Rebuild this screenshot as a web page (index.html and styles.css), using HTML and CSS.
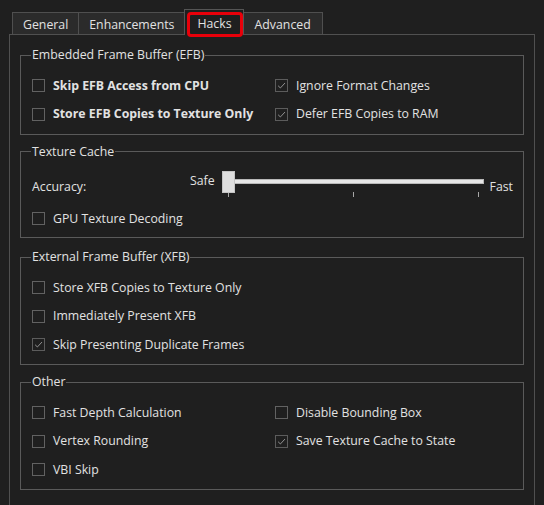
FILE: index.html
```html
<!DOCTYPE html>
<html lang="en">
<head>
<meta charset="utf-8">
<title>Graphics – Hacks</title>
<link rel="stylesheet" href="styles.css">
</head>
<body>
<div class="tabbar">
  <div class="tab">General</div>
  <div class="tab">Enhancements</div>
  <div class="tab tab-active"><span class="tab-label">Hacks</span><span class="highlight"></span></div>
  <div class="tab tab-last">Advanced</div>
</div>
<div class="pane">
  <fieldset class="group">
    <legend>Embedded Frame Buffer (EFB)</legend>
    <div class="grid">
      <label class="check bold"><span class="box"></span>Skip EFB Access from CPU</label>
      <label class="check"><span class="box checked"><svg viewBox="0 0 13 13"><path d="M2.5 6.8 L5.2 9.4 L10.6 3.6"/></svg></span>Ignore Format Changes</label>
      <label class="check bold"><span class="box"></span>Store EFB Copies to Texture Only</label>
      <label class="check"><span class="box checked"><svg viewBox="0 0 13 13"><path d="M2.5 6.8 L5.2 9.4 L10.6 3.6"/></svg></span>Defer EFB Copies to RAM</label>
    </div>
  </fieldset>

  <fieldset class="group group-texture">
    <legend>Texture Cache</legend>
    <div class="slider-row">
      <span class="acc-label">Accuracy:</span>
      <div class="slider-group">
        <span class="safe">Safe</span>
        <div class="slider">
          <div class="track"></div>
          <div class="handle"></div>
          <div class="ticks"><span></span><span></span><span></span></div>
        </div>
        <span class="fast">Fast</span>
      </div>
    </div>
    <div class="grid">
      <label class="check"><span class="box"></span>GPU Texture Decoding</label>
    </div>
  </fieldset>

  <fieldset class="group">
    <legend>External Frame Buffer (XFB)</legend>
    <div class="grid">
      <label class="check span2"><span class="box"></span>Store XFB Copies to Texture Only</label>
      <label class="check span2"><span class="box"></span>Immediately Present XFB</label>
      <label class="check span2"><span class="box checked"><svg viewBox="0 0 13 13"><path d="M2.5 6.8 L5.2 9.4 L10.6 3.6"/></svg></span>Skip Presenting Duplicate Frames</label>
    </div>
  </fieldset>

  <fieldset class="group">
    <legend>Other</legend>
    <div class="grid">
      <label class="check"><span class="box"></span>Fast Depth Calculation</label>
      <label class="check"><span class="box"></span>Disable Bounding Box</label>
      <label class="check"><span class="box"></span>Vertex Rounding</label>
      <label class="check"><span class="box checked"><svg viewBox="0 0 13 13"><path d="M2.5 6.8 L5.2 9.4 L10.6 3.6"/></svg></span>Save Texture Cache to State</label>
      <label class="check"><span class="box"></span>VBI Skip</label>
    </div>
  </fieldset>
</div>
</body>
</html>
```

FILE: styles.css
```css
* { box-sizing: border-box; }

html, body {
  margin: 0;
  height: 100%;
  overflow: hidden;
}

body {
  background: #1f1f1f;
  color: #e2e2e2;
  font-family: "Open Sans", "Noto Sans", "Liberation Sans", sans-serif;
  font-size: 12.3px;
  line-height: 16px;
  display: flex;
  flex-direction: column;
}

.tabbar {
  display: flex;
  align-items: flex-end;
  padding: 9px 0 0 12px;
  position: relative;
  z-index: 2;
  flex: none;
}

.tab {
  height: 22px;
  padding: 2px 10px 0;
  display: flex;
  align-items: center;
  background: #2b2b2b;
  border: 1px solid #4f4f4f;
  border-bottom: none;
  margin-right: -1px;
  white-space: nowrap;
}

.tab-active {
  position: relative;
  height: 26px;
  margin-bottom: -1px;
  background: #1f1f1f;
  padding: 2px 11px 0 12px;
  border-color: #555555;
}

.tab-last {
  padding: 2px 11px 0 11px;
}

.highlight {
  position: absolute;
  left: 2px;
  top: 2px;
  right: 0;
  height: 25px;
  border: 3px solid #e8000a;
  border-radius: 4px;
}

.pane {
  flex: 1;
  min-height: 0;
  overflow: hidden;
  margin-left: 9px;
  width: 526px;
  border: 1px solid #505050;
  border-bottom: none;
  padding: 12px 10px 0;
  display: flex;
  flex-direction: column;
  gap: 9px;
}

.group {
  margin: 0;
  min-width: 0;
  flex: none;
  border: 1px solid #5a5a5a;
  padding: 8.5px 10px 5px 11px;
}

.group-texture {
  margin-bottom: 2px;
  padding-bottom: 4px;
}

.group legend {
  padding: 0 1px;
  margin-left: -1px;
  line-height: 16px;
}

.grid {
  display: grid;
  grid-template-columns: 243px 1fr;
  grid-auto-rows: 28.5px;
}

.span2 { grid-column: span 2; }

.check {
  display: flex;
  align-items: center;
  gap: 8px;
  white-space: nowrap;
}

.bold { font-weight: 700; }

.box {
  width: 13px;
  height: 13px;
  flex: none;
  border: 1px solid #626262;
  background: #1f1f1f;
  display: flex;
  align-items: center;
  justify-content: center;
}

.box.checked { border-color: #5c5c5c; }

.box svg {
  width: 11px;
  height: 11px;
  fill: none;
  stroke: #9a9a9a;
  stroke-width: 1.1;
}

.slider-row {
  display: flex;
  align-items: flex-start;
  height: 36.5px;
}

.acc-label { margin-top: 11px; }

.slider-group {
  margin-left: auto;
  display: flex;
  align-items: flex-start;
}

.safe {
  margin-top: 4.5px;
  margin-right: 7px;
}

.fast {
  margin-top: 10.5px;
  margin-left: 6px;
}

.slider {
  position: relative;
  width: 262px;
  height: 27px;
  margin-top: 2.5px;
  padding-top: 8px;
}

.track {
  height: 5px;
  background: #e6e6e6;
  border: 1px solid #b8b8b8;
}

.handle {
  position: absolute;
  left: 0;
  top: 0;
  width: 13px;
  height: 22px;
  background: #dedede;
  border: 1px solid #c4c4c4;
}

.ticks {
  display: flex;
  justify-content: space-between;
  padding: 0 5px 0 6px;
  margin-top: 8px;
}

.ticks span {
  width: 1px;
  height: 5px;
  background: #a8a8a8;
}
```
